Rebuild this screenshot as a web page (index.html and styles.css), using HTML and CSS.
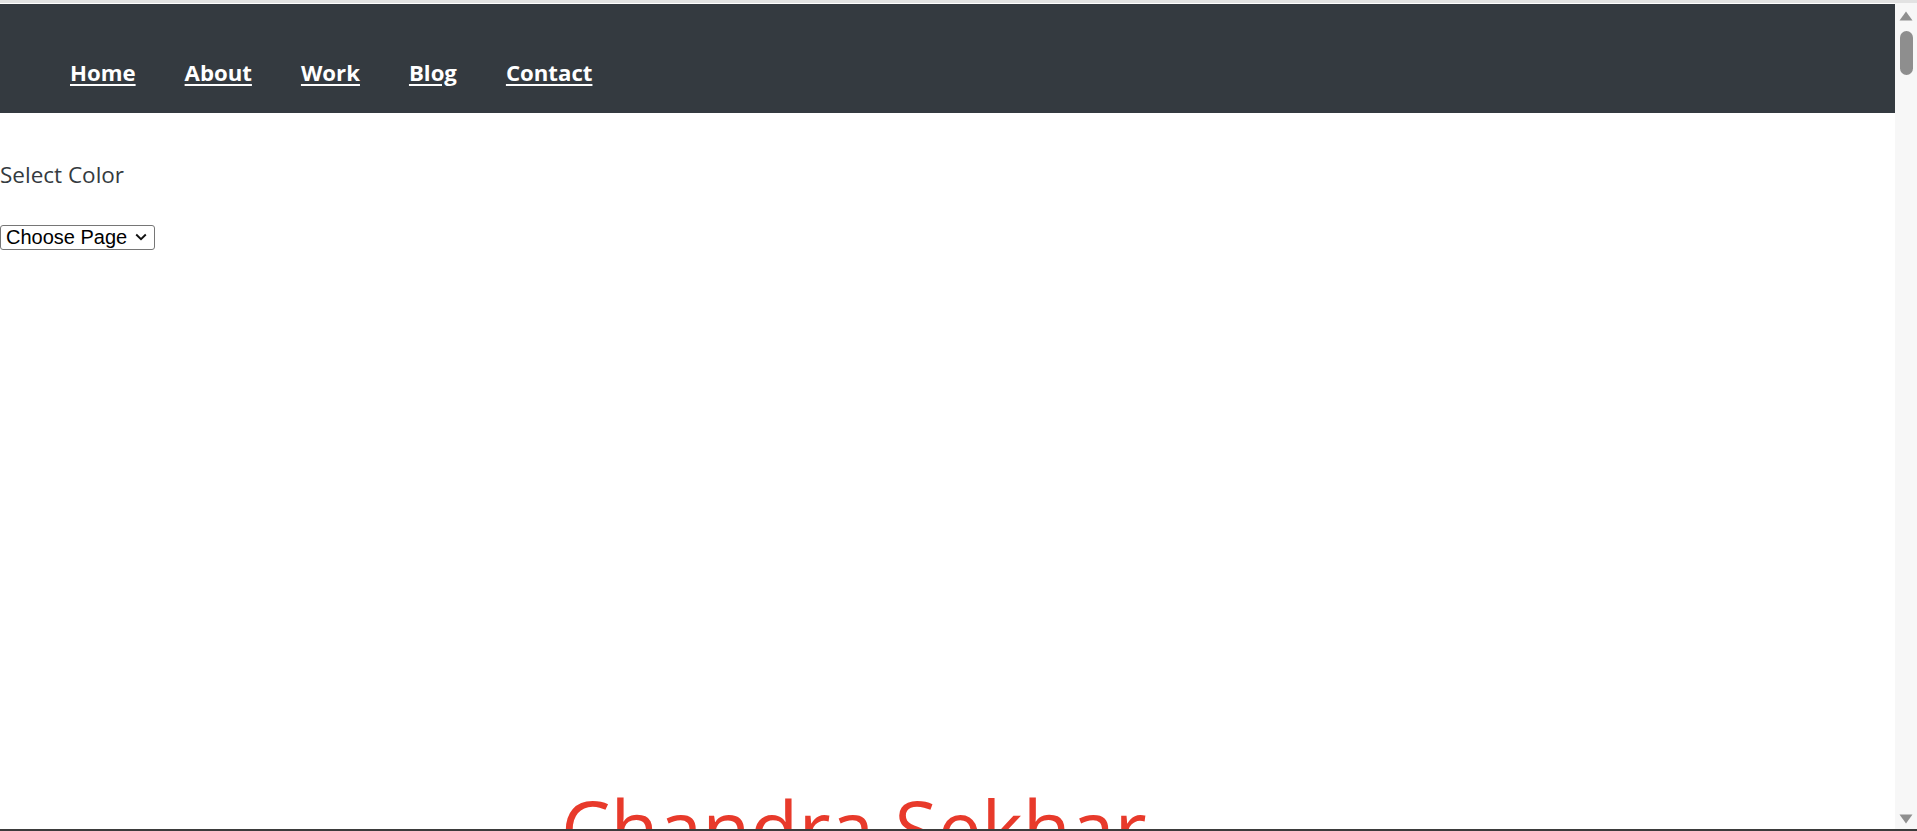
FILE: index.html
```html
<!DOCTYPE html>
<html lang="en">
<head>
<meta charset="utf-8">
<title>Chandra Sekhar</title>
<link rel="stylesheet" href="styles.css">
</head>
<body>
<div class="window">
  <div class="page">
    <nav class="navbar">
      <a href="#" class="nav-link">Home</a>
      <a href="#" class="nav-link">About</a>
      <a href="#" class="nav-link">Work</a>
      <a href="#" class="nav-link">Blog</a>
      <a href="#" class="nav-link">Contact</a>
    </nav>
    <p class="color-label">Select Color</p>
    <div class="select-wrap">
      <select class="page-select">
        <option>Choose Page</option>
      </select>
      <svg class="select-chevron" width="12" height="8" viewBox="0 0 12 8"><path d="M1.2 1.5 L6 6.2 L10.8 1.5" fill="none" stroke="#111" stroke-width="1.9"/></svg>
    </div>
    <section class="hero">
      <h1 class="hero-title">Chandra Sekhar</h1>
    </section>
  </div>
  <div class="scrollbar">
    <svg class="sb-arrow" width="14" height="10" viewBox="0 0 14 10"><path d="M7 0.5 L13.5 9.5 L0.5 9.5 Z" fill="#8f8f8f"/></svg>
    <div class="sb-thumb"></div>
    <div class="sb-spacer"></div>
    <svg class="sb-arrow" width="14" height="10" viewBox="0 0 14 10"><path d="M0.5 0.5 L13.5 0.5 L7 9.5 Z" fill="#8f8f8f"/></svg>
  </div>
</div>
</body>
</html>
```
FILE: styles.css
```css
html, body {
  margin: 0;
  padding: 0;
  background: #ffffff;
}

.window {
  display: flex;
  height: 100vh;
  box-sizing: border-box;
  border-top: 3px solid #e2e2e2;
  border-bottom: 2px solid #3b3b3b;
  overflow: hidden;
}

.page {
  flex: 1;
  min-width: 0;
  overflow: hidden;
  padding-top: 1px;
  font-family: "Open Sans", "Noto Sans", sans-serif;
}

.navbar {
  background: #343a40;
  height: 109px;
  box-sizing: border-box;
  display: flex;
  align-items: flex-start;
  gap: 49px;
  padding: 54px 0 0 70px;
}

.nav-link {
  color: #ffffff;
  font-weight: 700;
  font-size: 22.2px;
  line-height: 30px;
  text-decoration: underline;
  text-underline-offset: 3px;
  text-decoration-thickness: 2px;
}

.color-label {
  margin: 46px 0 0 0;
  font-size: 22.5px;
  color: #343a40;
}

.select-wrap {
  position: relative;
  display: block;
  width: 155px;
  margin: 35px 0 0 0;
}

.page-select {
  display: block;
  appearance: none;
  -webkit-appearance: none;
  box-sizing: border-box;
  width: 155px;
  height: 25px;
  margin: 0;
  padding: 0 0 0 5px;
  border: 1px solid #767676;
  border-radius: 3px;
  background: #ffffff;
  font-family: "Liberation Sans", Arial, sans-serif;
  font-size: 20px;
  line-height: 23px;
  color: #000000;
}

.select-chevron {
  position: absolute;
  right: 8px;
  top: 8px;
  pointer-events: none;
}

.hero {
  padding: 531px 0 0 561px;
}

.hero-title {
  margin: 0;
  font-weight: 400;
  font-size: 78.5px;
  line-height: 1.2;
  color: #e83a2b;
}

.scrollbar {
  width: 22px;
  flex: none;
  background: #f7f7f7;
  display: flex;
  flex-direction: column;
  align-items: center;
  padding: 8px 0 5px 0;
  box-sizing: border-box;
}

.sb-arrow {
  display: block;
  flex: none;
}

.sb-thumb {
  width: 13px;
  height: 44px;
  margin-top: 10px;
  border-radius: 7px;
  background: #8e8e8e;
}

.sb-spacer {
  flex: 1;
}
```
